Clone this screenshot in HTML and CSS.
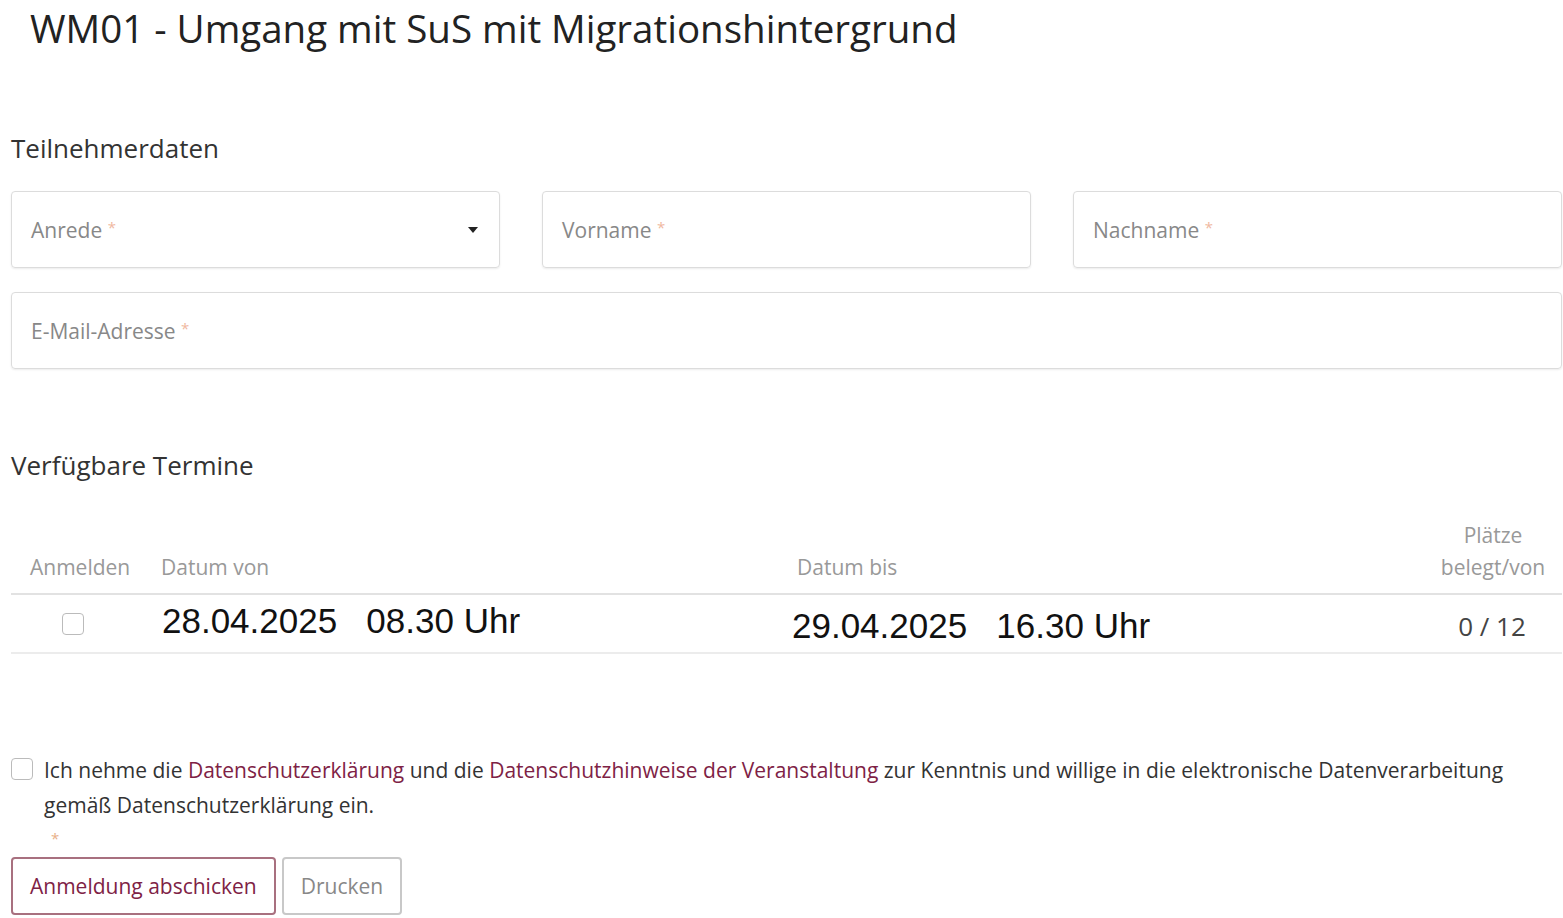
FILE: index.html
```html
<!DOCTYPE html>
<html lang="de">
<head>
<meta charset="UTF-8">
<meta name="viewport" content="width=device-width, initial-scale=1.0">
<title>WM01 - Anmeldung</title>
<link rel="stylesheet" href="styles.css">
</head>
<body>
  <div class="page">
    <h1 class="event-title">WM01 - Umgang mit SuS mit Migrationshintergrund</h1>

    <h2 class="section-title first">Teilnehmerdaten</h2>
    <div class="field-row">
      <div class="field select-field">
        <span class="placeholder">Anrede <span class="req">*</span></span>
        <svg class="caret" viewBox="0 0 10 6" xmlns="http://www.w3.org/2000/svg">
          <polygon points="0,0 10,0 5,6" fill="#222"/>
        </svg>
      </div>
      <div class="field">
        <span class="placeholder">Vorname <span class="req">*</span></span>
      </div>
      <div class="field">
        <span class="placeholder">Nachname <span class="req">*</span></span>
      </div>
    </div>
    <div class="field wide">
      <span class="placeholder">E-Mail-Adresse <span class="req">*</span></span>
    </div>

    <h2 class="section-title">Verfügbare Termine</h2>
    <table class="dates">
      <colgroup>
        <col style="width: 131px">
        <col style="width: 636px">
        <col>
        <col style="width: 138px">
      </colgroup>
      <thead>
        <tr>
          <th class="col-check">Anmelden</th>
          <th class="col-from">Datum von</th>
          <th class="col-to">Datum bis</th>
          <th class="col-seats">Plätze<br>belegt/von</th>
        </tr>
      </thead>
      <tbody>
        <tr>
          <td class="col-check"><input type="checkbox" class="box"></td>
          <td class="col-from date">28.04.2025   08.30 Uhr</td>
          <td class="col-to date">29.04.2025   16.30 Uhr</td>
          <td class="col-seats seats">0 / 12</td>
        </tr>
      </tbody>
    </table>

    <div class="consent">
      <input type="checkbox" class="box" id="consent-box">
      <label for="consent-box" class="consent-text">Ich nehme die <a href="#">Datenschutzerklärung</a> und die <a href="#">Datenschutzhinweise der Veranstaltung</a> zur Kenntnis und willige in die elektronische Datenverarbeitung gemäß Datenschutzerklärung ein.</label>
    </div>
    <div class="consent-req">*</div>

    <div class="actions">
      <button class="btn btn-primary">Anmeldung abschicken</button>
      <button class="btn">Drucken</button>
    </div>
  </div>
</body>
</html>
```

FILE: styles.css
```css
html, body {
  margin: 0;
  padding: 0;
  background: #fff;
  font-family: 'Open Sans', 'Noto Sans', sans-serif;
  color: #333;
}
.page {
  padding: 0 1px 0 11px;
}
.event-title {
  font-size: 38.5px;
  font-weight: 400;
  line-height: 48px;
  color: #222;
  margin: 0;
  padding: 4px 0 0 19px;
}
.section-title {
  font-size: 26px;
  font-weight: 400;
  line-height: 36px;
  color: #333;
  margin: 78px 0 0 0;
}
.section-title.first {
  margin: 78px 0 25px 0;
}
.field-row {
  display: grid;
  grid-template-columns: repeat(3, 1fr);
  column-gap: 42px;
  margin-bottom: 24px;
}
.field {
  height: 77px;
  box-sizing: border-box;
  border: 1px solid #dcdcdc;
  border-radius: 4px;
  box-shadow: 0 1px 2px rgba(0,0,0,0.08);
  display: flex;
  align-items: center;
  justify-content: space-between;
  padding: 0 19px;
}
.placeholder {
  font-size: 21px;
  color: #888;
}
.req {
  color: #f0b8a0;
  font-size: 15px;
  vertical-align: 5px;
}
.caret {
  width: 10px;
  height: 6px;
  margin-right: 2px;
}
.dates {
  width: 100%;
  table-layout: fixed;
  border-collapse: collapse;
  margin-top: 36px;
}
.dates th {
  font-size: 21px;
  font-weight: 400;
  line-height: 32px;
  color: #999;
  text-align: left;
  vertical-align: bottom;
  padding: 0 19px 10px 19px;
  border-bottom: 2px solid #e2e2e2;
}
.dates td {
  height: 51px;
  padding: 3px 19px;
  vertical-align: middle;
  border-bottom: 2px solid #ececec;
}
.dates .col-check {
  text-align: center;
}
.dates td.col-check {
  padding: 3px 23px 3px 15px;
}
.dates th.col-check {
  text-align: left;
}
.dates .col-seats {
  text-align: center;
  padding-left: 10px;
  padding-right: 15px;
}
.dates th.col-seats {
  padding-left: 15px;
}
.date {
  font-family: 'Liberation Sans', Arial, sans-serif;
  font-size: 35px;
  color: #111;
  white-space: pre;
}
.dates td.col-from {
  padding: 0 19px 6px 20px;
}
.dates td.col-to {
  padding: 5px 19px 1px 14px;
}
.dates td.seats {
  font-size: 26px;
  color: #444;
  padding: 5px 12px 1px 10px;
}
.box {
  appearance: none;
  -webkit-appearance: none;
  width: 22px;
  height: 22px;
  margin: 0;
  border: 1px solid #bbb;
  border-radius: 4px;
  background: #fff;
  vertical-align: middle;
}
.consent {
  display: flex;
  align-items: flex-start;
  gap: 11px;
  margin-top: 99px;
  padding-right: 40px;
}
.consent .box {
  flex: none;
  margin-top: 5px;
}
.consent-text {
  font-size: 21px;
  line-height: 35px;
  color: #333;
}
.consent-text a {
  color: #7e2245;
  text-decoration: none;
}
.consent-req {
  color: #e8b088;
  font-size: 15px;
  line-height: 31px;
  padding-left: 40px;
}
.actions {
  display: flex;
  gap: 6px;
  margin-top: 3px;
}
.btn {
  height: 58px;
  padding: 0 17px;
  font-family: 'Open Sans', 'Noto Sans', sans-serif;
  font-size: 21px;
  color: #888;
  background: #fff;
  border: 2px solid #c8c8c8;
  border-radius: 4px;
}
.btn-primary {
  color: #7e2245;
  border-color: #a8707f;
}
```
